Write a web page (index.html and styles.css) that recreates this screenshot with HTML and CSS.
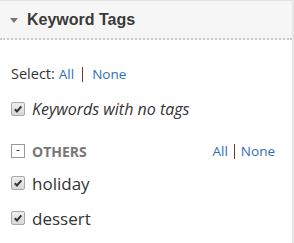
FILE: index.html
```html
<!DOCTYPE html>
<html>
<head>
<meta charset="utf-8">
<link rel="stylesheet" href="styles.css">
</head>
<body>
<div class="panel">
  <div class="panel-head">
    <span class="caret"></span>
    <span class="title">Keyword Tags</span>
  </div>
  <div class="panel-body">
    <div class="select-row">Select: <a class="link">All</a><span class="sep"></span><a class="link">None</a></div>
    <label class="check-row notags"><span class="cb"><svg viewBox="0 0 12 12" width="12" height="12"><path d="M2.8 6.2 L5 8.5 L9.3 3.4" fill="none" stroke="#333" stroke-width="2"/></svg></span><em>Keywords with no tags</em></label>
    <div class="group-head">
      <span class="toggle">-</span>
      <span class="group-name">OTHERS</span>
      <span class="group-links"><a class="link">All</a><span class="sep"></span><a class="link">None</a></span>
    </div>
    <label class="check-row tag"><span class="cb"><svg viewBox="0 0 12 12" width="12" height="12"><path d="M2.8 6.2 L5 8.5 L9.3 3.4" fill="none" stroke="#333" stroke-width="2"/></svg></span>holiday</label>
    <label class="check-row tag"><span class="cb"><svg viewBox="0 0 12 12" width="12" height="12"><path d="M2.8 6.2 L5 8.5 L9.3 3.4" fill="none" stroke="#333" stroke-width="2"/></svg></span>dessert</label>
  </div>
</div>
</body>
</html>
```
FILE: styles.css
```css
html, body { margin: 0; padding: 0; background: #fff; }
.panel {
  width: 292px;
  height: 243px;
  border-right: 2px solid #e6e6e6;
  font-family: "Open Sans", sans-serif;
  color: #333;
}
.panel-head {
  height: 37px;
  background: #f6f6f6;
  border-top: 1px solid #e2e2e2;
  border-bottom: 2px dotted #c8c8c8;
  display: flex;
  align-items: center;
  padding-left: 10px;
}
.caret {
  width: 0; height: 0;
  border-left: 4px solid transparent;
  border-right: 4px solid transparent;
  border-top: 5px solid #777;
  margin-right: 9px;
  margin-top: 1px;
}
.title {
  font-family: "Liberation Sans", Arial, sans-serif;
  font-weight: bold;
  font-size: 16px;
  color: #3a3a3a;
  margin-top: 1px;
}
.panel-body { padding: 24px 0 0 11px; }
.select-row { font-size: 14.5px; line-height: 20px; height: 20px; display: flex; align-items: center; }
.link { color: #2f6fb8; font-size: 13.5px; }
.select-row .link { margin-left: 4px; }
.sep { display: inline-block; width: 1px; height: 15px; background: #6b3b2b; margin: 0 6px; }
.select-row .sep { margin: 0 5px 0 8px; }
.check-row { display: flex; align-items: center; }
.cb {
  width: 12px; height: 12px;
  border: 1px solid #a8a8a8;
  border-radius: 2px;
  background: linear-gradient(#eee, #d8d8d8);
  margin-right: 7px;
  display: flex;
}
.notags { margin-top: 13px; font-size: 16px; height: 24px; }
.group-head { margin-top: 20px; display: flex; align-items: center; height: 20px; }
.toggle {
  width: 12px; height: 12px; border: 1px solid #999; box-sizing: content-box;
  font-size: 12px; line-height: 10px; text-align: center; color: #333; margin-right: 7px;
}
.group-name { font-weight: bold; color: #777; font-size: 14px; }
.group-links { margin-left: auto; margin-right: 17px; display: flex; align-items: center; }
.tag { font-size: 17px; height: 24px; margin-top: 10px; }
.tag + .tag { margin-top: 11px; }
```
